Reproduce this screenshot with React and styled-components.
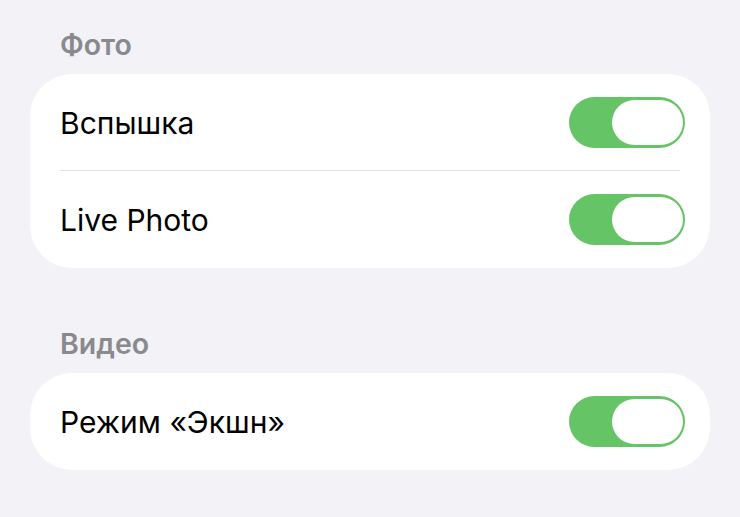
import React, { useState } from 'react'
import styled, { createGlobalStyle } from 'styled-components'

const Global = createGlobalStyle`
  html, body {
    margin: 0;
    padding: 0;
    background: #f2f2f7;
  }
  body {
    font-family: Inter, 'Liberation Sans', sans-serif;
    -webkit-font-smoothing: antialiased;
  }
`

const Page = styled.div`
  width: 740px;
  height: 517px;
  box-sizing: border-box;
  padding: 28px 30px 0;
  display: flex;
  flex-direction: column;
  gap: 59px;
  overflow: hidden;
`

const Section = styled.section`
  display: flex;
  flex-direction: column;
  gap: 12px;
`

const Header = styled.div`
  padding-left: 30px;
  font-size: 28.5px;
  line-height: 34px;
  font-weight: 600;
  color: #8a8a8e;
`

const Card = styled.div`
  background: #fff;
  border-radius: 42px;
  display: flex;
  flex-direction: column;
`

const Row = styled.div`
  height: 97px;
  box-sizing: border-box;
  display: flex;
  align-items: center;
  justify-content: space-between;
  padding: 0 25px 0 30px;
  position: relative;

  &::before {
    content: ${(p) => (p.divided ? "''" : 'none')};
    position: absolute;
    top: -1px;
    left: 30px;
    right: 30px;
    height: 1px;
    background: #e2e2e6;
  }
`

const Label = styled.span`
  font-size: 30px;
  color: #000;
  letter-spacing: 0;
`

const Track = styled.button`
  width: 116px;
  height: 51px;
  border: none;
  padding: 0;
  border-radius: 26px;
  background: ${(p) => (p.on ? '#65c466' : '#e9e9eb')};
  position: relative;
  cursor: pointer;
  flex-shrink: 0;
`

const Knob = styled.span`
  position: absolute;
  top: 3px;
  ${(p) => (p.on ? 'right: 2px;' : 'left: 2px;')}
  width: 71px;
  height: 45px;
  border-radius: 23px;
  background: #fff;
`

const Toggle = ({ initial = true }) => {
  const [on, setOn] = useState(initial)
  return (
    <Track on={on ? 1 : 0} onClick={() => setOn(!on)}>
      <Knob on={on ? 1 : 0} />
    </Track>
  )
}

const App = () => (
  <>
    <Global />
    <Page>
      <Section>
        <Header>Фото</Header>
        <Card>
          <Row>
            <Label>Вспышка</Label>
            <Toggle />
          </Row>
          <Row divided>
            <Label>Live Photo</Label>
            <Toggle />
          </Row>
        </Card>
      </Section>
      <Section>
        <Header>Видео</Header>
        <Card>
          <Row>
            <Label>Режим «Экшн»</Label>
            <Toggle />
          </Row>
        </Card>
      </Section>
    </Page>
  </>
)

export default App
